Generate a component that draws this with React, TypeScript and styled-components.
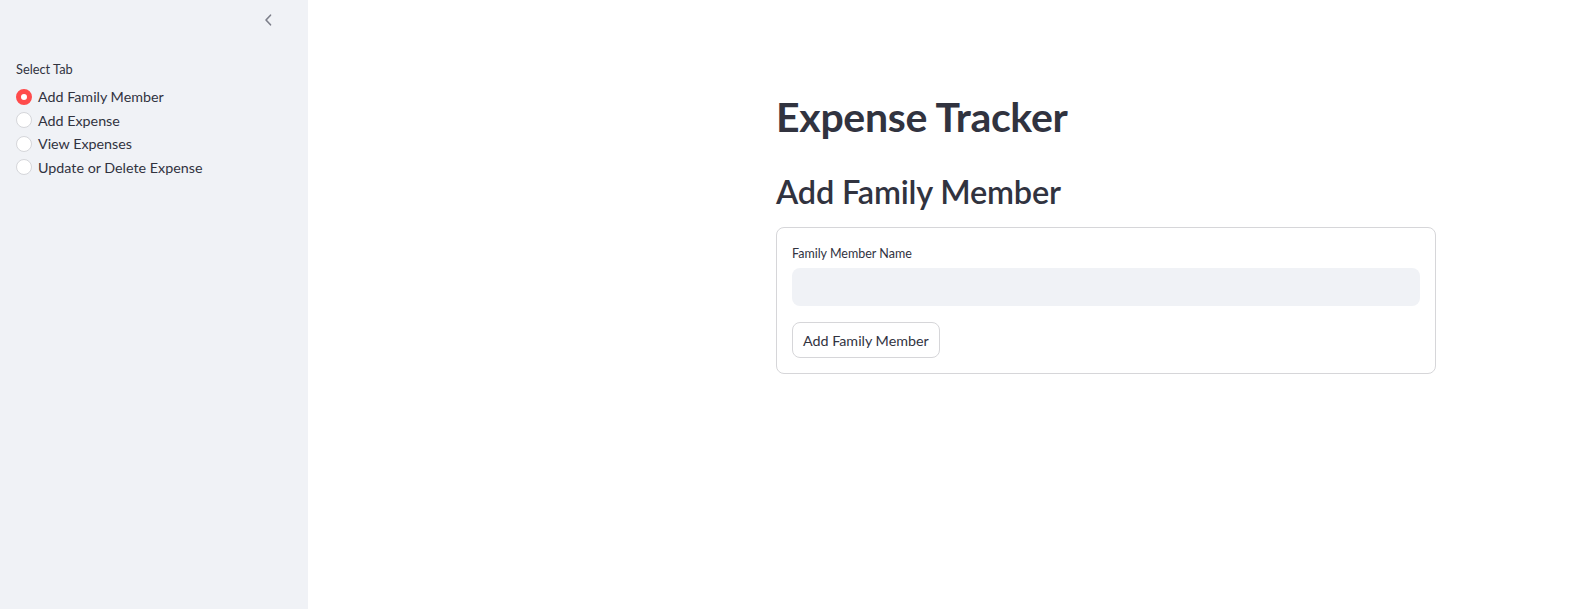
import styled, { createGlobalStyle } from 'styled-components';

const GlobalStyle = createGlobalStyle`
  body {
    margin: 0;
    font-family: Lato, "Noto Sans", sans-serif;
    color: #31333f;
    background: #ffffff;
  }
`;

const Page = styled.div`
  display: flex;
  height: 100vh;
`;

const Sidebar = styled.aside`
  width: 308px;
  flex-shrink: 0;
  background: #f0f2f6;
  padding: 8px 16px 0;
  box-sizing: border-box;
  display: flex;
  flex-direction: column;
`;

const SidebarHeader = styled.div`
  display: flex;
  justify-content: flex-end;
  padding-right: 12px;
  margin-bottom: 27px;
`;

const CollapseButton = styled.button`
  width: 24px;
  height: 24px;
  border: none;
  background: transparent;
  display: flex;
  align-items: center;
  justify-content: center;
  padding: 0;
  color: #7d7f8a;
  cursor: pointer;
`;

const GroupLabel = styled.div`
  font-size: 12.8px;
  line-height: 21px;
  margin-bottom: 5px;
`;

const RadioList = styled.div`
  display: flex;
  flex-direction: column;
`;

const RadioRow = styled.label`
  display: flex;
  align-items: center;
  height: 23.5px;
  font-size: 14.3px;
  cursor: pointer;
`;

const RadioDot = styled.span<{ $checked?: boolean }>`
  width: 16px;
  height: 16px;
  border-radius: 50%;
  box-sizing: border-box;
  margin-right: 6px;
  flex-shrink: 0;
  background: #ffffff;
  border: ${(p) => (p.$checked ? '5px solid #ff4b4b' : '1px solid #d5d6da')};
`;

const Main = styled.main`
  flex: 1;
  padding: 92px 157px 0 468px;
  box-sizing: border-box;
`;

const Title = styled.h1`
  margin: 0;
  font-size: 41px;
  font-weight: 700;
  line-height: 1.2;
  letter-spacing: -0.3px;
`;

const Subtitle = styled.h2`
  margin: 31px 0 0;
  font-size: 32.5px;
  font-weight: 600;
  line-height: 1.2;
  letter-spacing: -0.2px;
`;

const Form = styled.form`
  margin-top: 16px;
  border: 1px solid #d6d6d9;
  border-radius: 8px;
  padding: 15px;
  display: flex;
  flex-direction: column;
  gap: 16px;
`;

const Field = styled.div`
  display: flex;
  flex-direction: column;
`;

const FieldLabel = styled.label`
  font-size: 12.5px;
  line-height: 21px;
  margin-bottom: 4px;
`;

const TextInput = styled.input`
  height: 38px;
  border: none;
  border-radius: 8px;
  background: #f0f2f6;
  padding: 0 12px;
  font-family: inherit;
  font-size: 14.5px;
  color: #31333f;
  outline: none;
`;

const SubmitButton = styled.button`
  align-self: flex-start;
  height: 36px;
  padding: 0 10px;
  border: 1px solid #d6d6d9;
  border-radius: 8px;
  background: #ffffff;
  font-family: inherit;
  font-size: 14.3px;
  color: #31333f;
  cursor: pointer;
`;

const tabs = ['Add Family Member', 'Add Expense', 'View Expenses', 'Update or Delete Expense'];

export default function App() {
  return (
    <Page>
      <GlobalStyle />
      <Sidebar>
        <SidebarHeader>
          <CollapseButton aria-label="Collapse sidebar">
            <svg width="10" height="12" viewBox="0 0 10 12" fill="none">
              <path d="M7.5 1.2 L3 6 L7.5 10.8" stroke="currentColor" strokeWidth="1.6" strokeLinecap="round" strokeLinejoin="round" />
            </svg>
          </CollapseButton>
        </SidebarHeader>
        <GroupLabel>Select Tab</GroupLabel>
        <RadioList>
          {tabs.map((tab, i) => (
            <RadioRow key={tab}>
              <RadioDot $checked={i === 0} />
              {tab}
            </RadioRow>
          ))}
        </RadioList>
      </Sidebar>
      <Main>
        <Title>Expense Tracker</Title>
        <Subtitle>Add Family Member</Subtitle>
        <Form onSubmit={(e) => e.preventDefault()}>
          <Field>
            <FieldLabel>Family Member Name</FieldLabel>
            <TextInput type="text" />
          </Field>
          <SubmitButton type="submit">Add Family Member</SubmitButton>
        </Form>
      </Main>
    </Page>
  );
}
